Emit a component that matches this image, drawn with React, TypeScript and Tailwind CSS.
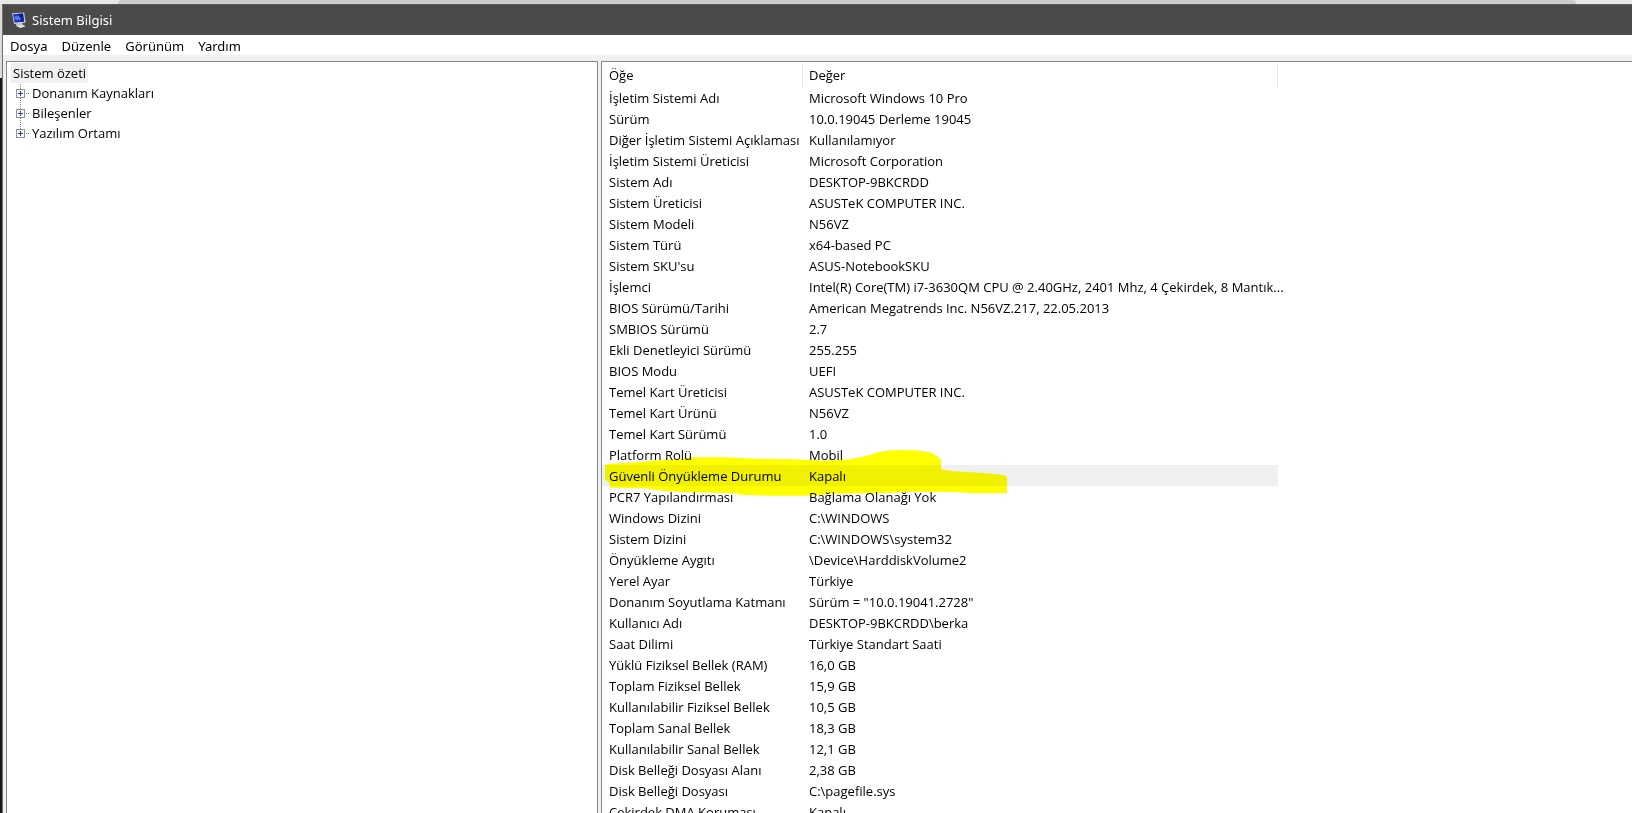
import React from 'react';

const menuItems = ['Dosya', 'Düzenle', 'Görünüm', 'Yardım'];

const categories = ['Donanım Kaynakları', 'Bileşenler', 'Yazılım Ortamı'];

const selectedItem = 'Güvenli Önyükleme Durumu';

const rows = [
  ['İşletim Sistemi Adı', 'Microsoft Windows 10 Pro'],
  ['Sürüm', '10.0.19045 Derleme 19045'],
  ['Diğer İşletim Sistemi Açıklaması', 'Kullanılamıyor'],
  ['İşletim Sistemi Üreticisi', 'Microsoft Corporation'],
  ['Sistem Adı', 'DESKTOP-9BKCRDD'],
  ['Sistem Üreticisi', 'ASUSTeK COMPUTER INC.'],
  ['Sistem Modeli', 'N56VZ'],
  ['Sistem Türü', 'x64-based PC'],
  ["Sistem SKU'su", 'ASUS-NotebookSKU'],
  ['İşlemci', 'Intel(R) Core(TM) i7-3630QM CPU @ 2.40GHz, 2401 Mhz, 4 Çekirdek, 8 Mantık...'],
  ['BIOS Sürümü/Tarihi', 'American Megatrends Inc. N56VZ.217, 22.05.2013'],
  ['SMBIOS Sürümü', '2.7'],
  ['Ekli Denetleyici Sürümü', '255.255'],
  ['BIOS Modu', 'UEFI'],
  ['Temel Kart Üreticisi', 'ASUSTeK COMPUTER INC.'],
  ['Temel Kart Ürünü', 'N56VZ'],
  ['Temel Kart Sürümü', '1.0'],
  ['Platform Rolü', 'Mobil'],
  ['Güvenli Önyükleme Durumu', 'Kapalı'],
  ['PCR7 Yapılandırması', 'Bağlama Olanağı Yok'],
  ['Windows Dizini', 'C:\\WINDOWS'],
  ['Sistem Dizini', 'C:\\WINDOWS\\system32'],
  ['Önyükleme Aygıtı', '\\Device\\HarddiskVolume2'],
  ['Yerel Ayar', 'Türkiye'],
  ['Donanım Soyutlama Katmanı', 'Sürüm = "10.0.19041.2728"'],
  ['Kullanıcı Adı', 'DESKTOP-9BKCRDD\\berka'],
  ['Saat Dilimi', 'Türkiye Standart Saati'],
  ['Yüklü Fiziksel Bellek (RAM)', '16,0 GB'],
  ['Toplam Fiziksel Bellek', '15,9 GB'],
  ['Kullanılabilir Fiziksel Bellek', '10,5 GB'],
  ['Toplam Sanal Bellek', '18,3 GB'],
  ['Kullanılabilir Sanal Bellek', '12,1 GB'],
  ['Disk Belleği Dosyası Alanı', '2,38 GB'],
  ['Disk Belleği Dosyası', 'C:\\pagefile.sys'],
  ['Çekirdek DMA Koruması', 'Kapalı'],
];

const ComputerIcon: React.FC = () => (
  <svg width="16" height="16" viewBox="0 0 16 16" aria-hidden="true">
    <path d="M5 11.5 11 10.5 12 13 14 14.2 10 15.8 5.5 14.5Z" fill="#c9c9c5" />
    <path d="M6 14.2 13.5 13.4 14 14.4 9.5 15.8Z" fill="#efefec" />
    <path d="M1 1.2 13.2.6 14.6 10.4 3.2 12.2Z" fill="#c4cbe0" />
    <path d="M2 2.2 12 1.6 13 9.4 3.8 10.8Z" fill="#1c3cc4" />
    <path d="M6.5 1.9 12 1.6 13 9.4 10 9.9Z" fill="#0a2196" />
    <path d="M3.6 7.2 5 4.4 6.2 7.8 7.4 3.8 8.6 8 9.6 5.6" fill="none" stroke="#8fa6f5" strokeWidth=".8" />
  </svg>
);

const ExpandIcon: React.FC<{ last: boolean }> = ({ last }) => (
  <svg width="16" height="20" viewBox="0 0 16 20" shapeRendering="crispEdges" aria-hidden="true">
    <path d={last ? 'M4 1h1v1h-1zM4 3h1v1h-1zM4 5h1v1h-1z' : 'M4 1h1v1h-1zM4 3h1v1h-1zM4 5h1v1h-1zM4 15h1v1h-1zM4 17h1v1h-1zM4 19h1v1h-1z'} fill="#808080" />
    <path d="M10 10h1v1h-1zM12 10h1v1h-1z" fill="#808080" />
    <rect x=".5" y="6.5" width="8" height="8" fill="#f6f6f6" stroke="#919191" />
    <path d="M2 10.5H7M4.5 8V13" stroke="#2b4894" />
  </svg>
);

const MarkerStroke: React.FC = () => (
  <svg
    className="absolute left-[3px] -top-4 z-10 mix-blend-multiply pointer-events-none"
    width="404"
    height="48"
    viewBox="0 0 404 48"
    aria-hidden="true"
  >
    <path
      fill="#ffff00"
      d="M0 16 5 14.7 32 13.3 48 11.7 68 10.3 87 8.3H120L152 9.7 188 10.3 218 11.7 245 10.3 265 6Q275 2 283 1.7 305 0 325 3.3L333 7.7 336 11V20.3L348 22.3 375 23.7 398 25.7 402 27.7V44L370 44.3 348 43 305 42.7 282 44 228 44.7 203 46.7H162L135 45.7 132 44.3 85 43.3 57 41.7 40 39.3 5 38.7 4 32.7 0 31Z"
    />
  </svg>
);

const TitleBar: React.FC = () => (
  <header className="flex h-[31px] shrink-0 items-center gap-[5px] border-t border-[#5c5b59] bg-[#4c4a48] pl-2 text-white">
    <ComputerIcon />
    <h1>Sistem Bilgisi</h1>
  </header>
);

const MenuBar: React.FC = () => (
  <nav className="flex h-5 shrink-0 items-center gap-[14px] bg-white pl-[7px] pt-px">
    {menuItems.map((item) => (
      <button key={item} type="button">
        {item}
      </button>
    ))}
  </nav>
);

const CategoryTree: React.FC = () => (
  <aside className="w-[592px] shrink-0 border border-b-0 border-[#828790] bg-white pl-1 pt-px">
    <button type="button" className="block h-5 bg-[#f0f0f0] px-[2px]">
      Sistem özeti
    </button>
    <ul className="pl-[5px]">
      {categories.map((category, index) => (
        <li key={category}>
          <button type="button" className="flex h-5 items-center">
            <ExpandIcon last={index === categories.length - 1} />
            {category}
          </button>
        </li>
      ))}
    </ul>
  </aside>
);

const DetailsTable: React.FC = () => (
  <main className="min-w-0 flex-1 overflow-hidden border-l border-t border-[#828790] bg-white">
    <table className="w-[676px] table-fixed border-collapse text-left">
      <thead>
        <tr className="h-[25px]">
          <th className="w-[201px] p-0 pt-px font-normal">
            <div className="h-6 border-r border-[#e5e5e5] pl-[7px] leading-6">Öğe</div>
          </th>
          <th className="p-0 pt-px font-normal">
            <div className="h-6 border-r border-[#e5e5e5] pl-[6px] leading-6">Değer</div>
          </th>
        </tr>
      </thead>
      <tbody>
        {rows.map(([name, value]) => (
          <tr key={name} className={name === selectedItem ? 'h-[21px] bg-[#f0f0f0]' : 'h-[21px]'}>
            <td className="relative p-0 pl-[7px] whitespace-nowrap">
              {name}
              {name === selectedItem && <MarkerStroke />}
            </td>
            <td className="p-0 pl-[6px] whitespace-nowrap">{value}</td>
          </tr>
        ))}
      </tbody>
    </table>
  </main>
);

const App: React.FC = () => {
  return (
    <div className="flex h-screen flex-col overflow-hidden bg-[#d9d9d9] font-['Noto_Sans',sans-serif] text-[13px] leading-5 text-black">
      {/* edge of the window behind */}
      <div className="h-1 shrink-0 bg-[#e8e8e8] pl-[118px] pr-14">
        <div className="h-full rounded-t bg-[#cbcbcb]" />
      </div>
      <div className="flex min-h-0 flex-1">
        <div className="w-[2px] shrink-0 border-t-[74px] border-[#dcdcdc] bg-[#181818]" />
        <div className="flex min-w-0 flex-1 flex-col border-l border-[#6e6e6e] bg-[#f0f0f0]">
          <TitleBar />
          <MenuBar />
          <div className="flex min-h-0 flex-1 gap-[3px] pl-[3px] pt-[6px] font-['Open_Sans',sans-serif]">
            <CategoryTree />
            <DetailsTable />
          </div>
        </div>
      </div>
    </div>
  );
};

export default App;
